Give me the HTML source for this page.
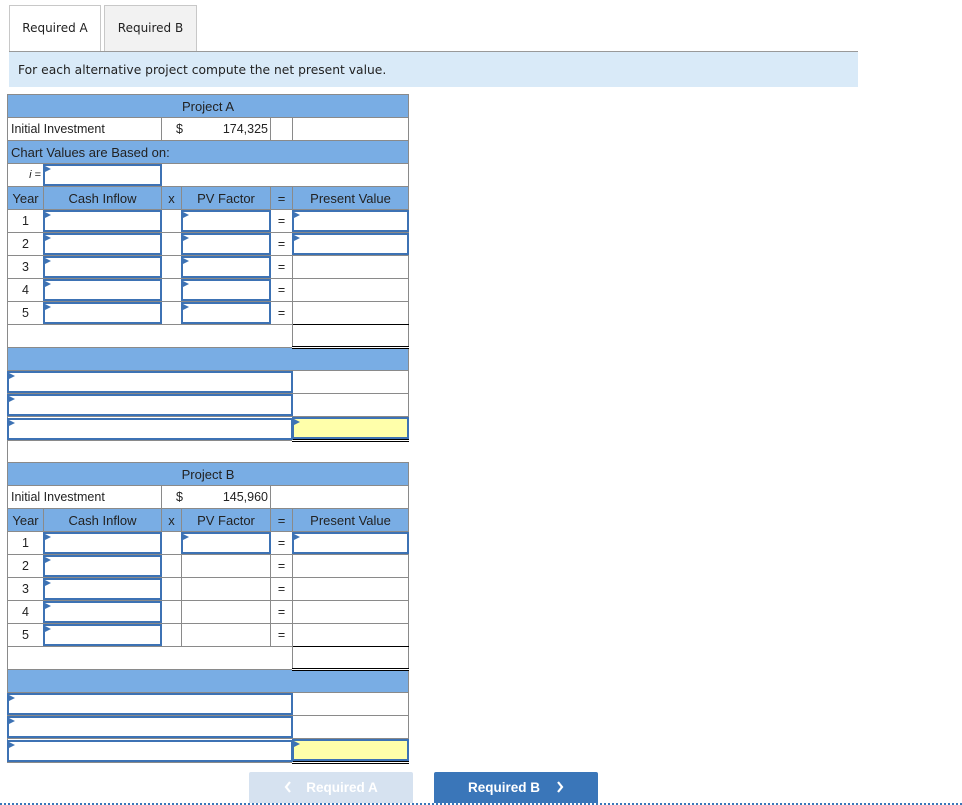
<!DOCTYPE html>
<html><head><meta charset="utf-8"><style>
body{margin:0;width:962px;height:805px;position:relative;background:#fff;font-family:"Liberation Sans",Arial,sans-serif;overflow:hidden}
.tab{position:absolute;top:5px;height:46px;box-sizing:border-box;border:1px solid #c8c8c8;border-bottom:none;font:12px "DejaVu Sans",Verdana,sans-serif;line-height:44px;text-align:center;color:#222}
.line{position:absolute;left:9px;top:51px;width:849px;height:1px;background:#999}
.band{position:absolute;left:9px;top:52px;width:849px;height:35px;background:#d9eaf8;font:12.3px "DejaVu Sans",Verdana,sans-serif;line-height:37px;color:#222;box-sizing:border-box;padding-left:9px}
table{position:absolute;left:7px;border-collapse:collapse;table-layout:fixed;width:401px;font-size:12.5px;color:#222}
td{border:1px solid #8a8a8a;height:23px;padding:0;box-sizing:border-box}
.b{background:#79ade4}
.h td{background:#79ade4;text-align:center;font-size:13px}
.c{text-align:center}
.inp{height:22px;box-sizing:border-box;border:2px solid #3d72b4;position:relative;margin:0 -1px}
.inp:before{content:"";position:absolute;left:0;top:0;border-left:6px solid #3d72b4;border-top:3.5px solid transparent;border-bottom:3.5px solid transparent}
.y{background:#ffffaa}
.dbl{border-bottom:3px double #000}
.blk{border-bottom:1px solid #000}
.btn{position:absolute;top:772px;height:31px;width:164px;color:#fff;font-weight:bold;font-size:13.5px;text-align:center;line-height:32px;border-radius:2px 2px 0 0}
.dot{position:absolute;left:0;top:803px;width:962px;border-top:2px dotted #3a76b9}
</style></head><body>
<div class="tab" style="left:9px;width:92px;background:#fff;height:47px">Required A</div>
<div class="tab" style="left:104px;width:93px;background:#f2f2f2">Required B</div>
<div class="line"></div>
<div class="band">For each alternative project compute the net present value.</div>

<table style="top:94px">
<colgroup><col style="width:36px"><col style="width:118px"><col style="width:20px"><col style="width:89px"><col style="width:22px"><col style="width:116px"></colgroup>
<tr class="h"><td colspan="6">Project A</td></tr>
<tr><td colspan="2" style="padding-left:3px">Initial Investment</td><td colspan="2" style="padding-left:14px">$<span style="float:right;padding-right:2px">174,325</span></td><td></td><td></td></tr>
<tr><td colspan="6" class="b" style="padding-left:3px;font-size:13px">Chart Values are Based on:</td></tr>
<tr><td style="text-align:right;padding-right:2px;font-size:11px"><i>i</i> =</td><td><div class="inp"></div></td><td colspan="4"></td></tr>
<tr class="h"><td>Year</td><td>Cash Inflow</td><td>x</td><td>PV Factor</td><td>=</td><td>Present Value</td></tr>
<tr><td class="c">1</td><td><div class="inp"></div></td><td></td><td><div class="inp"></div></td><td class="c">=</td><td><div class="inp"></div></td></tr>
<tr><td class="c">2</td><td><div class="inp"></div></td><td></td><td><div class="inp"></div></td><td class="c">=</td><td><div class="inp"></div></td></tr>
<tr><td class="c">3</td><td><div class="inp"></div></td><td></td><td><div class="inp"></div></td><td class="c">=</td><td></td></tr>
<tr><td class="c">4</td><td><div class="inp"></div></td><td></td><td><div class="inp"></div></td><td class="c">=</td><td></td></tr>
<tr><td class="c">5</td><td><div class="inp"></div></td><td></td><td><div class="inp"></div></td><td class="c">=</td><td class="blk"></td></tr>
<tr><td colspan="5"></td><td class="dbl"></td></tr>
<tr><td colspan="6" class="b"></td></tr>
<tr><td colspan="5"><div class="inp"></div></td><td></td></tr>
<tr><td colspan="5"><div class="inp"></div></td><td></td></tr>
<tr><td colspan="5"><div class="inp"></div></td><td class="dbl"><div class="inp y"></div></td></tr>
<tr><td colspan="6" style="border:none;border-left:1px solid #8a8a8a"></td></tr>
</table>

<table style="top:462px">
<colgroup><col style="width:36px"><col style="width:118px"><col style="width:20px"><col style="width:89px"><col style="width:22px"><col style="width:116px"></colgroup>
<tr class="h"><td colspan="6">Project B</td></tr>
<tr><td colspan="2" style="padding-left:3px">Initial Investment</td><td colspan="2" style="padding-left:14px">$<span style="float:right;padding-right:2px">145,960</span></td><td colspan="2"></td></tr>
<tr class="h"><td>Year</td><td>Cash Inflow</td><td>x</td><td>PV Factor</td><td>=</td><td>Present Value</td></tr>
<tr><td class="c">1</td><td><div class="inp"></div></td><td></td><td><div class="inp"></div></td><td class="c">=</td><td><div class="inp"></div></td></tr>
<tr><td class="c">2</td><td><div class="inp"></div></td><td></td><td></td><td class="c">=</td><td></td></tr>
<tr><td class="c">3</td><td><div class="inp"></div></td><td></td><td></td><td class="c">=</td><td></td></tr>
<tr><td class="c">4</td><td><div class="inp"></div></td><td></td><td></td><td class="c">=</td><td></td></tr>
<tr><td class="c">5</td><td><div class="inp"></div></td><td></td><td></td><td class="c">=</td><td class="blk"></td></tr>
<tr><td colspan="5"></td><td class="dbl"></td></tr>
<tr><td colspan="6" class="b"></td></tr>
<tr><td colspan="5"><div class="inp"></div></td><td></td></tr>
<tr><td colspan="5"><div class="inp"></div></td><td></td></tr>
<tr><td colspan="5"><div class="inp"></div></td><td class="dbl"><div class="inp y"></div></td></tr>
</table>

<div class="btn" style="left:249px;background:#d6e2f0"><svg width="8" height="12" style="vertical-align:-1px;margin-right:14px"><path d="M6 1L2 6L6 11" stroke="#fff" stroke-width="2.2" fill="none"/></svg>Required A</div>
<div class="btn" style="left:434px;background:#3a76b9">Required B<svg width="8" height="12" style="vertical-align:-1px;margin-left:16px"><path d="M2 1L6 6L2 11" stroke="#fff" stroke-width="2.2" fill="none"/></svg></div>
<div class="dot"></div>
</body></html>
